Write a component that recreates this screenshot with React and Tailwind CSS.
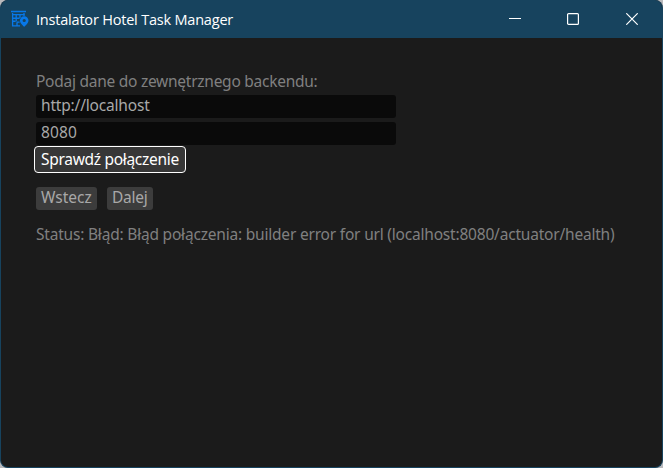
function HotelIcon() {
  return (
    <svg className="h-[18px] w-[18px] shrink-0" viewBox="0 0 18 18" fill="none" stroke="#0878e8" strokeWidth="1.3">
      <path d="M0 1.5h15M1.6 3v13M1 15.8h8M13 3v3M6 15.8v-3.6M6 12.2h2.6" />
      <path d="M1 4.6h12.6M1.6 8.2h7M1.6 11.3h3" strokeWidth="1.4" />
      <path d="M5.2 4v7.5M9 4v4" strokeWidth="1.3" />
      <path fill="#0878e8" stroke="none" fillRule="evenodd" d="M13.2 6.2a4.3 4.3 0 0 0-4.3 4.3c0 2.8 4.3 6.3 4.3 6.3s4.3-3.5 4.3-6.3a4.3 4.3 0 0 0-4.3-4.3Zm0 2.7a1.6 1.6 0 1 1 0 3.2 1.6 1.6 0 0 1 0-3.2Z" />
    </svg>
  );
}

function TitleBar() {
  return (
    <header className="flex h-[38px] shrink-0 items-center bg-[#17435e] pl-[10px]">
      <HotelIcon />
      <h1 className="ml-[7px] mt-px whitespace-nowrap font-['Open_Sans',sans-serif] text-[14.5px] leading-5 tracking-[-0.2px] text-white">
        Instalator Hotel Task Manager
      </h1>
      <div className="ml-auto flex text-white">
        <button aria-label="Minimize" className="flex h-[38px] w-[58px] items-center justify-center">
          <svg className="h-3 w-3" viewBox="0 0 12 12" stroke="currentColor"><path d="M0 5.5h12" /></svg>
        </button>
        <button aria-label="Maximize" className="flex h-[38px] w-[58px] items-center justify-center">
          <svg className="h-3 w-3" viewBox="0 0 12 12" fill="none" stroke="currentColor" strokeWidth="1.2"><rect x=".6" y=".6" width="10.8" height="10.8" rx="1" /></svg>
        </button>
        <button aria-label="Close" className="flex h-[38px] w-[60px] items-center justify-center">
          <svg className="h-3 w-3" viewBox="0 0 12 12" stroke="currentColor" strokeWidth="1.2"><path d="m.3.3 11.4 11.4M11.7.3.3 11.7" /></svg>
        </button>
      </div>
    </header>
  );
}

export default function App() {
  return (
    <div className="h-[468px] w-[663px] bg-[#b9b9bc]">
      <div className="flex h-full flex-col overflow-hidden rounded-[8px] border-x border-b border-[#17435e] bg-[#1b1b1b]">
        <TitleBar />
        <main className="flex flex-col items-start whitespace-nowrap pl-[35px] pt-[33px] font-['Noto_Sans',sans-serif] text-[15.5px] font-normal leading-[20px] text-[#808080]">
          <p className="tracking-[-0.26px]">Podaj dane do zewnętrznego backendu:</p>
          <div className="mt-[4px] h-[23px] w-[360px] rounded-[3px] bg-[#0a0a0a] pl-[5px] leading-[21px] tracking-[-0.18px] text-[#a8a8a8]">http://localhost</div>
          <div className="mt-[4px] h-[23px] w-[360px] rounded-[3px] bg-[#0a0a0a] pl-[5px] leading-[21px] tracking-[0.1px] text-[#a8a8a8]">8080</div>
          <button className="-ml-[2px] mt-px flex h-[27px] w-[152px] rounded-[4px] border border-white bg-[#373737] pl-[6px] leading-[24px] tracking-[-0.3px] text-white">Sprawdź połączenie</button>
          <div className="mt-[14px] flex gap-[10px] text-[#a8a8a8]">
            <button className="flex h-[23px] w-[61px] rounded-[3px] bg-[#3c3c3c] pl-[5px] leading-[21px] tracking-[0px]">Wstecz</button>
            <button className="flex h-[23px] w-[46px] rounded-[3px] bg-[#3c3c3c] pl-[5px] leading-[21px] tracking-[-0.25px]">Dalej</button>
          </div>
          <p className="mt-[14px] tracking-[-0.2px]">Status: Błąd: Błąd połączenia: builder error for url (localhost:8080/actuator/health)</p>
        </main>
      </div>
    </div>
  );
}
